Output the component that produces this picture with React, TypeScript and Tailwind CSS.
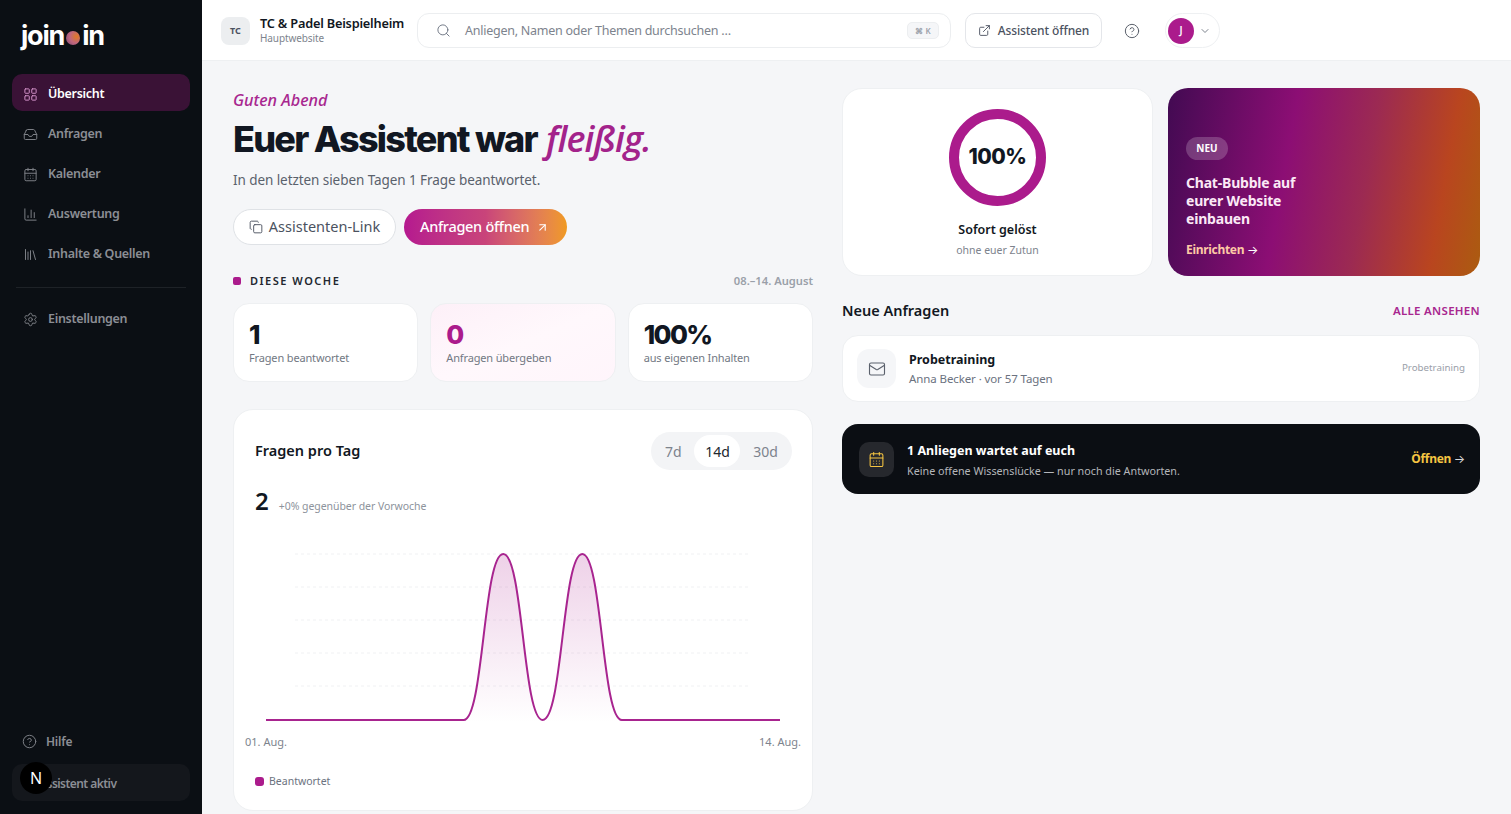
import React from "react";
import { LayoutGrid, Inbox, CalendarDays, ChartColumn, Library, Settings, CircleHelp, Search, Copy, ArrowUpRight, ExternalLink, ChevronDown, Mail } from "lucide-react";

function NavItem({ icon: Icon, label, active }: { icon: any; label: string; active?: boolean }) {
  return (
    <div className={`h-[37px] mb-[3px] pt-[3px] rounded-[10px] flex items-center gap-[10px] pl-[11px] ${active ? "bg-[#3a1236] text-white" : "text-[#8b8e94]"}`}>
      <Icon size={15} strokeWidth={1.6} className={active ? "text-[#d08fc6]" : "text-[#7c7f85]"} />
      <span className="text-[12.5px] font-semibold tracking-[-0.3px]">{label}</span>
    </div>
  );
}

function Stat({ value, label, accent }: { value: string; label: string; accent?: boolean }) {
  return (
    <div className={`h-[79px] rounded-[16px] border border-[#eef0f2] pl-[15px] pt-[16px] ${accent ? "bg-gradient-to-br from-[#fdf0f8] via-[#fff8fc] to-[#fff5fb]" : "bg-white"}`}>
      <div className={`font-['Inter',sans-serif] text-[26px] leading-[30px] font-extrabold tracking-[-1.6px] ${accent ? "text-[#ab1b8c]" : "text-[#111722]"}`}>{value}</div>
      <div className="-mt-[1px] text-[11px] leading-[18px] tracking-[-0.15px] text-[#727883]">{label}</div>
    </div>
  );
}

function Chart() {
  const lines = [9, 42, 75, 108, 141];
  const d = "M21 175 L218.7 175 C238.5 175 238.5 9 258.2 9 C278 9 278 175 297.7 175 C317.5 175 317.5 9 337.3 9 C357 9 357 175 376.8 175 L535 175";
  return (
    <svg width="556" height="185" viewBox="0 0 556 185" className="block">
      <defs>
        <linearGradient id="area" x1="0" y1="0" x2="0" y2="1">
          <stop offset="0" stopColor="#ab1b8c" stopOpacity="0.2" />
          <stop offset="1" stopColor="#ab1b8c" stopOpacity="0" />
        </linearGradient>
      </defs>
      {lines.map((y) => (
        <line key={y} x1="50" x2="505" y1={y} y2={y} stroke="#f0f1f3" strokeWidth="1" strokeDasharray="3 3" />
      ))}
      <path d={`${d} L535 178 L21 178 Z`} fill="url(#area)" />
      <path d={d} fill="none" stroke="#a8248f" strokeWidth="2" />
    </svg>
  );
}

export default function App() {
  return (
    <div className="h-[814px] w-[1511px] overflow-hidden flex bg-[#f5f6f8] font-['Noto_Sans',sans-serif] text-[#111722]">
      <aside className="w-[202px] shrink-0 bg-[#0b0f14] flex flex-col px-[12px]">
        <div className="h-[74px] pl-[9px] pt-[17px] flex items-start">
          <div className="flex items-center font-['Inter',sans-serif] text-[27px] leading-[38px] font-bold tracking-[-1.2px] text-white">
            join
            <span className="w-[14px] h-[14px] mx-[2px] mt-[3px] rounded-full bg-[radial-gradient(circle_at_75%_40%,#e07a25_0%,#c0667f_50%,#7a4a72_100%)]" />
            in
          </div>
        </div>
        <NavItem icon={LayoutGrid} label="Übersicht" active />
        <NavItem icon={Inbox} label="Anfragen" />
        <NavItem icon={CalendarDays} label="Kalender" />
        <NavItem icon={ChartColumn} label="Auswertung" />
        <NavItem icon={Library} label="Inhalte & Quellen" />
        <div className="h-px mx-[4px] mt-[13px] mb-[11px] bg-[#1e2227]" />
        <NavItem icon={Settings} label="Einstellungen" />
        <div className="mt-auto h-[37px] flex items-center gap-[9px] pl-[10px] text-[#8b8e94]">
          <CircleHelp size={15} strokeWidth={1.6} className="text-[#7c7f85]" />
          <span className="text-[12px] font-semibold tracking-[-0.2px]">Hilfe</span>
        </div>
        <div className="relative h-[37px] pt-[2px] mt-[4px] mb-[13px] rounded-[10px] bg-[#14171c] flex items-center pl-[27px] text-[#8b8e94]">
          <span className="text-[12px] font-semibold tracking-[-0.55px]">Assistent aktiv</span>
          <div className="absolute left-[8px] top-[-2px] w-[32px] h-[32px] rounded-full bg-black flex items-center justify-center text-white text-[16px]">N</div>
        </div>
      </aside>

      <div className="flex-1 min-w-0 flex flex-col">
        <header className="h-[61px] shrink-0 pt-[1px] bg-white border-b border-[#eef0f2] flex items-center pl-[19px]">
          <div className="w-[29px] h-[28px] rounded-[8px] bg-[#eceef0] flex items-center justify-center text-[9px] font-bold text-[#4b5260]">TC</div>
          <div className="ml-[10px] w-[157px] -mt-[2px]">
            <div className="text-[12.75px] leading-[16px] font-semibold tracking-[-0.2px] text-[#111722] whitespace-nowrap">TC &amp; Padel Beispielheim</div>
            <div className="text-[10px] leading-[14px] tracking-[-0.1px] text-[#7d838d]">Hauptwebsite</div>
          </div>
          <div className="w-[534px] h-[35px] rounded-[12px] border border-[#eceef0] bg-white flex items-center pl-[18px] pr-[11px]">
            <Search size={15} strokeWidth={1.5} className="text-[#6b7280]" />
            <span className="ml-[14px] pt-[2px] text-[12.5px] tracking-[-0.25px] text-[#7d838d]">Anliegen, Namen oder Themen durchsuchen …</span>
            <span className="ml-auto w-[32px] h-[17px] rounded-[5px] border border-[#eceef0] bg-[#f5f6f8] flex items-center justify-center text-[8px] font-semibold text-[#9aa0a9]">⌘ K</span>
          </div>
          <div className="ml-[14px] w-[137px] h-[35px] rounded-[10px] border border-[#e4e6ea] bg-white flex items-center justify-center gap-[7px] text-[#4b5260]">
            <ExternalLink size={13} strokeWidth={1.7} />
            <span className="text-[12px] font-medium tracking-[-0.1px]">Assistent öffnen</span>
          </div>
          <CircleHelp size={16} strokeWidth={1.5} className="ml-[22px] text-[#5b616c]" />
          <div className="ml-[25px] w-[55px] h-[35px] rounded-full border border-[#eef0f2] flex items-center pl-[2px]">
            <div className="w-[26px] h-[26px] rounded-full bg-[#ab1b8c] flex items-center justify-center text-white text-[10px] font-semibold">J</div>
            <ChevronDown size={12} className="ml-[5px] text-[#7d838d]" />
          </div>
        </header>

        <main className="flex-1 min-h-0 pl-[31px] pr-[31px] pt-[27px] grid grid-cols-[580px_638px] gap-x-[29px] items-start">
          <section>
            <div className="pt-[1px] text-[16.2px] leading-[22px] italic font-medium text-[#a8278f]">Guten Abend</div>
            <h1 className="mt-[6px] text-[36px] leading-[44px] font-['Inter',sans-serif] font-extrabold tracking-[-1.75px] text-[#111722] whitespace-nowrap">
              Euer Assistent war <span className="ml-[3px] font-['Open_Sans',sans-serif] italic font-semibold tracking-[-0.9px] text-[#a3238b]">fleißig.</span>
            </h1>
            <p className="mt-[9px] text-[13.5px] leading-[20px] tracking-[-0.07px] text-[#5a616c]">In den letzten sieben Tagen 1 Frage beantwortet.</p>
            <div className="mt-[19px] flex gap-[8px]">
              <div className="w-[163px] h-[36px] rounded-full bg-white border border-[#dfe2e6] flex items-center justify-center gap-[6px] text-[#4b5260]">
                <Copy size={14} strokeWidth={1.6} />
                <span className="text-[14.5px]">Assistenten-Link</span>
              </div>
              <div className="w-[163px] h-[36px] rounded-full bg-gradient-to-r from-[#b5188f] via-[#c9447a] to-[#f09a1f] flex items-center pl-[16px] text-white">
                <span className="text-[14.5px] font-medium tracking-[-0.3px]">Anfragen öffnen</span>
                <ArrowUpRight size={13} className="ml-[7px]" />
              </div>
            </div>
            <div className="mt-[26px] h-[20px] flex items-center">
              <span className="w-[8px] h-[8px] rounded-[2px] bg-[#ab1b8c]" />
              <span className="ml-[9px] text-[11px] font-semibold tracking-[1.5px] text-[#22272f]">DIESE WOCHE</span>
              <span className="ml-auto text-[11.2px] font-semibold text-[#9aa0a9]">08.–14. August</span>
            </div>
            <div className="mt-[12px] grid grid-cols-3 gap-x-[12px]">
              <Stat value="1" label="Fragen beantwortet" />
              <Stat value="0" label="Anfragen übergeben" accent />
              <Stat value="100%" label="aus eigenen Inhalten" />
            </div>
            <div className="mt-[27px] h-[402px] rounded-[20px] bg-white border border-[#eef0f2] px-[11px] pt-[22px]">
              <div className="flex items-center justify-between pl-[10px] pr-[9px]">
                <span className="text-[14.5px] font-semibold text-[#111722]">Fragen pro Tag</span>
                <div className="w-[141px] h-[38px] rounded-full bg-[#f3f4f6] flex items-center justify-between pl-[14px] pr-[14px] text-[14px] text-[#7d838d]">
                  <span>7d</span>
                  <span className="w-[46px] h-[32px] rounded-full bg-white flex items-center justify-center text-[#22272f]">14d</span>
                  <span>30d</span>
                </div>
              </div>
              <div className="mt-[14px] pl-[10px] flex items-baseline gap-[10px]">
                <span className="text-[24px] leading-[34px] font-semibold text-[#111722]">2</span>
                <span className="text-[10.5px] tracking-[-0.05px] text-[#8d939c]">+0% gegenüber der Vorwoche</span>
              </div>
              <div className="mt-[27px]"><Chart /></div>
              <div className="mt-[4px] flex justify-between text-[11px] leading-[16px] text-[#7d838d]">
                <span>01. Aug.</span>
                <span>14. Aug.</span>
              </div>
              <div className="mt-[23px] pl-[10px] flex items-center gap-[5px]">
                <span className="w-[9px] h-[9px] rounded-[3px] bg-[#ab1b8c]" />
                <span className="text-[10.5px] leading-[16px] text-[#6b7280]">Beantwortet</span>
              </div>
            </div>
          </section>

          <section>
            <div className="grid grid-cols-[311px_312px] gap-x-[15px]">
              <div className="h-[188px] rounded-[20px] bg-white border border-[#eef0f2] flex flex-col items-center pt-[20px]">
                <div className="w-[97px] h-[97px] pb-[2px] rounded-full border-[10px] border-[#ab1b8c] flex items-center justify-center">
                  <span className="font-['Inter',sans-serif] text-[21px] font-extrabold tracking-[-0.5px] text-[#111722]">100%</span>
                </div>
                <div className="mt-[15px] text-[12.5px] leading-[18px] font-semibold text-[#111722]">Sofort gelöst</div>
                <div className="mt-[3px] text-[10.5px] leading-[16px] text-[#7d838d]">ohne euer Zutun</div>
              </div>
              <div className="h-[188px] rounded-[20px] bg-[linear-gradient(100deg,#420a52_0%,#8c0e74_38%,#9c2a52_62%,#b9451f_85%,#ab5c10_100%)] pl-[18px] pt-[49px] text-white">
                <div className="flex w-[42px] h-[23px] rounded-full bg-white/20 items-center justify-center text-[10px] font-bold">NEU</div>
                <div className="mt-[14px] text-[14px] leading-[18px] font-bold tracking-[-0.2px] text-[#fbe9f6]">Chat-Bubble auf<br />eurer Website<br />einbauen</div>
                <div className="mt-[14px] text-[12px] leading-[16px] font-bold tracking-[-0.3px] text-[#fdc9a5]">Einrichten <span className="font-['Inter',sans-serif] text-white font-normal">→</span></div>
              </div>
            </div>
            <div className="mt-[24px] h-[22px] flex items-center justify-between">
              <span className="text-[14.5px] font-semibold text-[#111722]">Neue Anfragen</span>
              <span className="text-[11.5px] font-semibold tracking-[0.3px] text-[#a8278f]">ALLE ANSEHEN</span>
            </div>
            <div className="mt-[13px] h-[67px] rounded-[16px] bg-white border border-[#eef0f2] flex items-center pl-[14px] pr-[14px]">
              <div className="w-[39px] h-[39px] rounded-[12px] bg-[#f5f6f8] flex items-center justify-center text-[#5b616c]">
                <Mail size={18} strokeWidth={1.5} />
              </div>
              <div className="ml-[13px] pt-[1px]">
                <div className="text-[12.5px] leading-[18px] font-bold text-[#111722]">Probetraining</div>
                <div className="mt-[1px] text-[11.5px] leading-[17px] tracking-[-0.1px] text-[#6b7280]">Anna Becker · vor 57 Tagen</div>
              </div>
              <span className="ml-auto text-[9.75px] text-[#9aa0a9]">Probetraining</span>
            </div>
            <div className="mt-[22px] h-[70px] rounded-[16px] bg-[#0b0e13] flex items-center pl-[17px] pr-[15px]">
              <div className="w-[35px] h-[35px] rounded-[10px] bg-[#26282d] flex items-center justify-center text-[#f5c542]">
                <CalendarDays size={17} strokeWidth={1.5} />
              </div>
              <div className="ml-[13px] pt-[2px]">
                <div className="text-[12.5px] leading-[18px] font-bold text-white">1 Anliegen wartet auf euch</div>
                <div className="mt-[3px] text-[10.75px] leading-[16px] text-[#b4b6ba]">Keine offene Wissenslücke — nur noch die Antworten.</div>
              </div>
              <span className="ml-auto text-[12px] font-bold tracking-[-0.3px] text-[#f5c542]">Öffnen <span className="font-['Inter',sans-serif] font-normal text-[#d8d8d8]">→</span></span>
            </div>
          </section>
        </main>
      </div>
    </div>
  );
}
